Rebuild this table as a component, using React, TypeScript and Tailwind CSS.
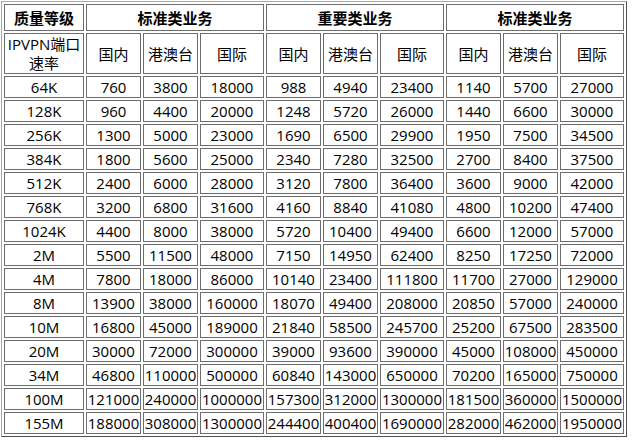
const groups = ['标准类业务', '重要类业务', '标准类业务'];

const rows: [string, ...number[]][] = [
  ['64K', 760, 3800, 18000, 988, 4940, 23400, 1140, 5700, 27000],
  ['128K', 960, 4400, 20000, 1248, 5720, 26000, 1440, 6600, 30000],
  ['256K', 1300, 5000, 23000, 1690, 6500, 29900, 1950, 7500, 34500],
  ['384K', 1800, 5600, 25000, 2340, 7280, 32500, 2700, 8400, 37500],
  ['512K', 2400, 6000, 28000, 3120, 7800, 36400, 3600, 9000, 42000],
  ['768K', 3200, 6800, 31600, 4160, 8840, 41080, 4800, 10200, 47400],
  ['1024K', 4400, 8000, 38000, 5720, 10400, 49400, 6600, 12000, 57000],
  ['2M', 5500, 11500, 48000, 7150, 14950, 62400, 8250, 17250, 72000],
  ['4M', 7800, 18000, 86000, 10140, 23400, 111800, 11700, 27000, 129000],
  ['8M', 13900, 38000, 160000, 18070, 49400, 208000, 20850, 57000, 240000],
  ['10M', 16800, 45000, 189000, 21840, 58500, 245700, 25200, 67500, 283500],
  ['20M', 30000, 72000, 300000, 39000, 93600, 390000, 45000, 108000, 450000],
  ['34M', 46800, 110000, 500000, 60840, 143000, 650000, 70200, 165000, 750000],
  ['100M', 121000, 240000, 1000000, 157300, 312000, 1300000, 181500, 360000, 1500000],
  ['155M', 188000, 308000, 1300000, 244400, 400400, 1690000, 282000, 462000, 1950000],
];

const cell = 'border border-solid border-[#6e6e6e] p-0 text-center align-middle whitespace-nowrap leading-[18px]';

export default function App() {
  return (
    <div className="min-h-screen bg-white pl-px pt-px text-[15px] text-black [font-family:'Open_Sans','Noto_Sans_CJK_SC',sans-serif]">
      <table className="table-fixed border-separate border-spacing-[2px] border border-solid border-t-[#a8a8a8] border-l-[#a8a8a8] border-r-[#505050] border-b-[#505050]">
        <colgroup>
          <col className="w-[80px]" />
          {[0, 1, 2].map((g) => (
            <>
              <col key={`a${g}`} className="w-[55px]" />
              <col key={`b${g}`} className="w-[55px]" />
              <col key={`c${g}`} className="w-[64px]" />
            </>
          ))}
        </colgroup>
        <tbody>
          <tr>
            <td className={`${cell} h-[27px] font-bold`}>质量等级</td>
            {groups.map((g, i) => (
              <td key={i} colSpan={3} className={`${cell} h-[27px] font-bold`}>
                {g}
              </td>
            ))}
          </tr>
          <tr>
            <td className={`${cell} h-[41px] !leading-[19px]`}>
              IPVPN端口
              <br />
              速率
            </td>
            {[0, 1, 2].flatMap((g) =>
              ['国内', '港澳台', '国际'].map((t) => (
                <td key={`${g}${t}`} className={`${cell} h-[41px]`}>
                  {t}
                </td>
              )),
            )}
          </tr>
          {rows.map(([rate, ...vals]) => (
            <tr key={rate}>
              <td className={`${cell} h-[22px]`}>{rate}</td>
              {vals.map((v, i) => (
                <td key={i} className={`${cell} h-[22px]`}>
                  {v}
                </td>
              ))}
            </tr>
          ))}
        </tbody>
      </table>
    </div>
  );
}
